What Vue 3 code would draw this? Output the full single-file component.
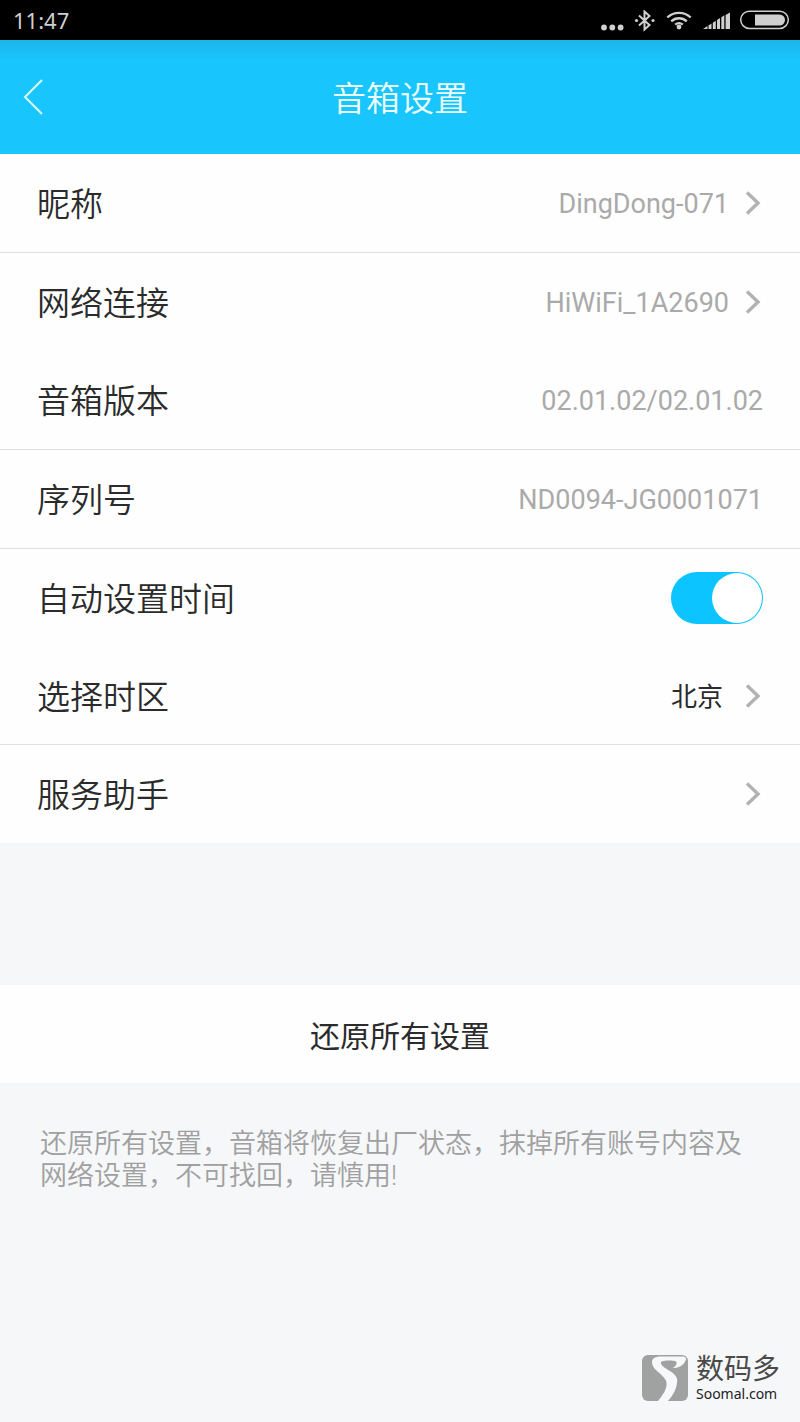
<script setup>
import { ref } from 'vue'

const autoTime = ref(true)
const rows = [
  { label: '昵称', value: 'DingDong-071', link: true, line: true },
  { label: '网络连接', value: 'HiWiFi_1A2690', link: true },
  { label: '音箱版本', value: '02.01.02/02.01.02', line: true },
  { label: '序列号', value: 'ND0094-JG0001071', line: true },
  { label: '自动设置时间', toggle: true },
  { label: '选择时区', value: '北京', link: true, dark: true, line: true },
  { label: '服务助手', value: '', link: true }
]
</script>

<template>
  <div class="screen">
    <div class="status">
      <span class="clock">11:47</span>
      <svg class="indicators" width="192" height="24" viewBox="0 0 192 24" aria-hidden="true">
        <g fill="#cfcfcf">
          <circle cx="6" cy="17.500" r="2.900" />
          <circle cx="14.300" cy="17.500" r="2.900" />
          <circle cx="22.600" cy="17.500" r="2.900" />
          <circle cx="38.500" cy="10.500" r="1.600" />
          <circle cx="55" cy="10.500" r="1.600" />
          <circle cx="81" cy="17" r="2.400" />
          <path d="M105 19 109.500 16V19zM110.500 15.500l3-2V19h-3zM114.800 12.700l3-2V19h-3zM119 10l3-2V19h-3zM123.300 7.300l3-2V19h-3zM127.600 5l4.400-2.500V19h-4.400z" />
          <path d="M157 4.500h24.500a5.500 5.500 0 0 1 0 11H157z" />
        </g>
        <g fill="none" stroke="#cfcfcf">
          <path d="M41 5.500 51.500 15l-5 4.500V1.500l5 4.500L41 15.500" stroke-width="2" />
          <path d="M69.300 7.500a17 17 0 0 1 23.400 0M73.200 11.300a11.500 11.500 0 0 1 15.600 0M77.200 14.700a6 6 0 0 1 7.600 0" stroke-width="2.300" />
          <rect x="142.700" y="1.200" width="47.600" height="17.200" rx="8.600" stroke-width="1.500" />
        </g>
      </svg>
    </div>

    <header class="bar">
      <button class="back" type="button" aria-label="返回">
        <svg width="22" height="36" viewBox="0 0 22 36"><path d="M20 1 3 18l17 17" fill="none" stroke="#d8fbff" stroke-width="2" /></svg>
      </button>
      <h1>音箱设置</h1>
    </header>

    <main>
      <div class="list">
        <component
          :is="row.toggle ? 'label' : row.link ? 'button' : 'div'"
          v-for="row in rows"
          :key="row.label"
          class="row"
          :class="{ line: row.line }"
          :type="row.link ? 'button' : null"
        >
          <span class="name">{{ row.label }}</span>
          <input v-if="row.toggle" v-model="autoTime" class="switch" type="checkbox" role="switch" />
          <span v-else class="value" :class="{ dark: row.dark }">{{ row.value }}</span>
          <svg v-if="row.link" class="chevron" width="18" height="26" viewBox="0 0 18 26" aria-hidden="true">
            <path d="M2 2.500 13 13 2 23.500" fill="none" stroke="#b2b2b2" stroke-width="3.400" />
          </svg>
        </component>
      </div>

      <button class="reset" type="button">还原所有设置</button>
      <p class="hint">还原所有设置，音箱将恢复出厂状态，抹掉所有账号内容及网络设置，不可找回，请慎用!</p>
    </main>

    <footer class="brand">
      <svg width="46" height="46" viewBox="0 0 46 46" aria-hidden="true">
        <rect width="46" height="46" rx="6" fill="#a0a1a1" />
        <path d="M10 7C10 3 14 1.500 19 1.500h21c4 0 5 2 3 5-2 4-6 6.500-12 6.500 3-2 4-4 3.500-6-1-2-14-2-15.500 0-1 3 4 6 9 9 6 4 8 7 7 12-1 7-4 12-9 18H16c5-6 8-11 8.500-16 .5-5-2-7-6-11C14 15 10 12 10 7z" fill="#f6f8f9" />
      </svg>
      <div class="brand-text">
        <span class="brand-name">数码多</span>
        <span class="brand-site">Soomal.com</span>
      </div>
    </footer>
  </div>
</template>

<style>
body {
  background: #f5f7f9;
}
</style>

<style scoped>
.screen {
  display: flex;
  flex-direction: column;
  min-height: 100vh;
  background: #f5f7f9;
  color: #2b2b2b;
  font-family: Roboto, "Noto Sans CJK SC", sans-serif;
}
.status {
  display: flex;
  align-items: center;
  justify-content: space-between;
  height: 40px;
  padding: 0 10px 0 13px;
  background: #000;
  color: #cfcfcf;
}
.clock {
  font-family: "Noto Sans", sans-serif;
  font-size: 22px;
  line-height: 30px;
}
.indicators {
  margin-top: 4px;
}
.bar {
  display: grid;
  grid-template-columns: 80px 1fr 80px;
  align-items: center;
  height: 114px;
  background: linear-gradient(#1cb6ea, #18c5fc 20px);
}
button {
  margin: 0;
  border: 0;
  background: none;
  color: inherit;
  font-family: inherit;
  text-align: left;
}
.back {
  display: flex;
  padding: 10px 22px;
}
h1 {
  margin: 0;
  padding-top: 4px;
  color: #ecfdff;
  font-size: 34px;
  font-weight: 350;
  line-height: 48px;
  text-align: center;
}
.list {
  background: #fefefe;
}
.row {
  display: flex;
  align-items: center;
  height: 98px;
  padding: 0 37px;
}
button.row {
  width: 100%;
}
.line {
  border-bottom: 1px solid #e0e0e0;
}
button.line {
  height: 98px;
}
button.line:first-child {
  height: 99px;
}
.name {
  flex: 1;
  padding-top: 4px;
  font-size: 33px;
  font-weight: 350;
  line-height: 48px;
}
.value {
  padding-top: 2px;
  color: #aaa;
  font-size: 27px;
  line-height: 40px;
}
.dark {
  margin-right: 6px;
  color: #2b2b2b;
  font-size: 26px;
}
.chevron {
  margin-left: 16px;
}
.switch {
  appearance: none;
  display: flex;
  width: 92px;
  height: 52px;
  margin: 0;
  padding: 1px;
  box-sizing: border-box;
  border-radius: 26px;
  background: #ccc;
}
.switch::before {
  content: "";
  width: 50px;
  height: 50px;
  border-radius: 50%;
  background: #fff;
}
.switch:checked {
  justify-content: flex-end;
  background: #0cc4ff;
}
.reset {
  display: block;
  width: 100%;
  height: 98px;
  margin-top: 142px;
  background: #fefefe;
  font-size: 30px;
  text-align: center;
}
.hint {
  margin: 45px 40px 0;
  color: #a0a0a0;
  font-size: 27px;
  font-weight: 350;
  line-height: 32px;
}
.brand {
  display: flex;
  align-items: center;
  justify-content: flex-end;
  gap: 8px;
  margin-top: auto;
  padding: 24px 20px 20px;
}
.brand-text {
  display: flex;
  flex-direction: column;
}
.brand-name {
  color: #4a4a4a;
  font-size: 28px;
  line-height: 32px;
}
.brand-site {
  color: #222;
  font-family: "Noto Sans", sans-serif;
  font-size: 14px;
  line-height: 16px;
}
</style>
